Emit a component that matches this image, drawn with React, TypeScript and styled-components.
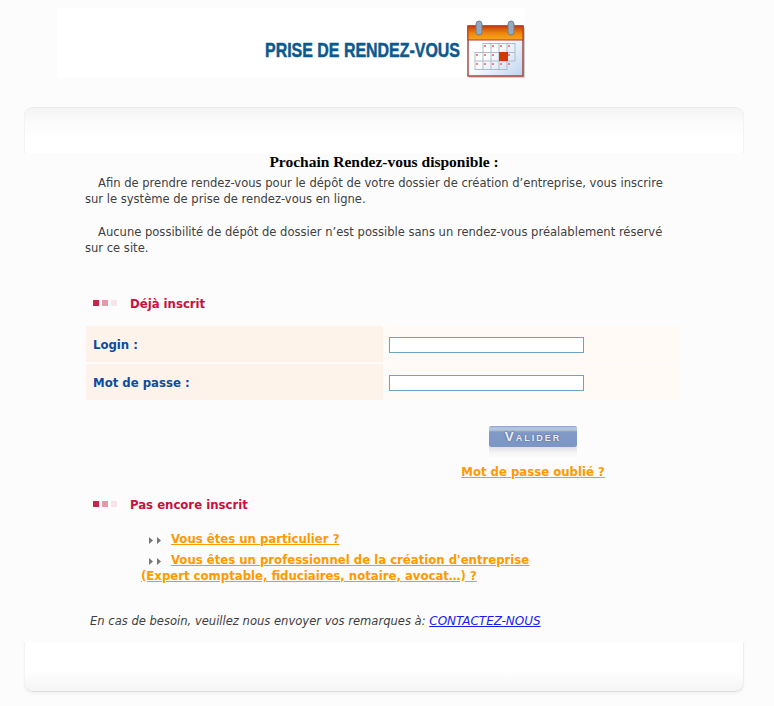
import React from "react";
import styled, { createGlobalStyle } from "styled-components";

const GlobalStyle = createGlobalStyle`
    html, body {
        margin: 0;
        padding: 0;
        background: #fcfcfc;
        font-family: "DejaVu Sans", Verdana, sans-serif;
    }
`;

const Page = styled.div`
    width: 774px;
    height: 706px;
    overflow: hidden;
    padding-top: 8px;
    box-sizing: border-box;
`;

const Banner = styled.div`
    width: 468px;
    height: 70px;
    margin-left: 57px;
    background: #ffffff;
    display: flex;
    align-items: flex-start;
    padding-left: 208px;
    box-sizing: border-box;
`;

const BannerTitle = styled.svg`
    width: 197px;
    height: 24px;
    margin-top: 29px;
    flex: none;
    overflow: visible;
`;

const BannerIcon = styled.svg`
    width: 60px;
    height: 60px;
    margin-top: 12px;
    margin-left: 5px;
    flex: none;
`;

const Frame = styled.div`
    width: 720px;
    margin: 29px 0 0 24px;
`;

const PanelTop = styled.div`
    height: 46px;
    box-sizing: border-box;
    border-radius: 9px 9px 0 0;
    border-top: 1px solid #eaeaea;
    background: linear-gradient(#f4f4f4 0, #fafafa 12px, #ffffff 30px);
    box-shadow: inset 1px 0 0 #f3f3f3, inset -1px 0 0 #f3f3f3;
`;

const PanelBottom = styled.div`
    height: 50px;
    margin-top: 13px;
    box-sizing: border-box;
    border-radius: 0 0 9px 9px;
    border-bottom: 1px solid #dedede;
    background: linear-gradient(#ffffff 0, #ffffff 28px, #f5f5f5 100%);
    box-shadow: inset 1px 0 0 #f3f3f3, inset -1px 0 0 #eeeeee, 0 2px 3px #f3f3f3;
`;

const Title = styled.h1`
    margin: 0;
    height: 23px;
    text-align: center;
    font: bold 15.5px/18px "Liberation Serif", "Times New Roman", serif;
    color: #000000;
`;

const Content = styled.div`
    padding-left: 61px;
    width: 596px;
`;

const Paragraph = styled.p`
    max-width: 585px;
    margin: 0 0 18px;
    text-indent: 13px;
    font-size: 11.55px;
    line-height: 15.5px;
    color: #404040;
`;

const SectionHead = styled.div<{ $top: number }>`
    display: flex;
    align-items: center;
    gap: 13px;
    margin-top: ${(p) => p.$top}px;
    padding-left: 8px;
    height: 16px;
    font-family: "DejaVu Sans Condensed", "DejaVu Sans", sans-serif;
    font-size: 13px;
    font-weight: bold;
    color: #c8103c;
`;

const Squares = styled.span`
    display: flex;
    gap: 3px;
`;

const Square = styled.i<{ $color: string }>`
    display: block;
    width: 6px;
    height: 6px;
    background: ${(p) => p.$color};
`;

const FormGrid = styled.div`
    display: grid;
    grid-template-columns: 297px 295px;
    grid-auto-rows: 36px;
    gap: 2px;
    margin: 15px 0 0 1px;
`;

const LabelCell = styled.label`
    display: flex;
    align-items: center;
    padding-left: 7px;
    background: #fef3ea;
    font-family: "DejaVu Sans Condensed", "DejaVu Sans", sans-serif;
    font-size: 13px;
    font-weight: bold;
    color: #0a4da3;
`;

const InputCell = styled.div`
    display: flex;
    align-items: center;
    padding: 2px 0 0 4px;
    background: #fffaf6;
`;

const TextInput = styled.input`
    width: 195px;
    height: 16px;
    box-sizing: border-box;
    border: 1px solid #6ba3c7;
    background: #ffffff;
    padding: 0;
    outline: none;
`;

const ActionColumn = styled.div`
    display: flex;
    flex-direction: column;
    align-items: center;
    width: 144px;
    margin: 26px 0 0 376px;
`;

const ValidateButton = styled.button`
    position: relative;
    display: block;
    width: 88px;
    height: 21px;
    padding: 1px 0 0;
    border: 0;
    border-radius: 2px;
    background: linear-gradient(#8aa1cb 0, #b9c8e3 2px, #b3c3e0 4px, #819ac7 6px, #7c96c5 100%);
    color: #e9eef8;
    font: bold 13.5px/16px "Liberation Sans", Arial, sans-serif;
    letter-spacing: 2px;
    font-variant: small-caps;
    text-shadow: 0 0 2px #40557e;

    &::after {
        content: "";
        position: absolute;
        left: 0;
        right: 0;
        top: 100%;
        height: 13px;
        background: linear-gradient(#dfe0e6, #f6f6f7 6px, #ffffff);
    }
`;

const OrangeLink = styled.a`
    font-family: "DejaVu Sans Condensed", "DejaVu Sans", sans-serif;
    font-size: 13px;
    font-weight: bold;
    line-height: 16px;
    color: #ff9900;
    text-decoration: underline;
`;

const ForgotLink = styled(OrangeLink)`
    margin-top: 17px;
    white-space: nowrap;
`;

const LinkList = styled.div`
    margin: 19px 0 0 56px;
    width: 500px;
`;

const LinkRow = styled.div`
    line-height: 16px;
    font-size: 13px;
    margin-bottom: 5px;
`;

const Arrows = styled.svg`
    display: inline-block;
    width: 13px;
    height: 7px;
    margin: 0 9px 0 8px;
    vertical-align: -1px;
`;

const HelpLine = styled.p`
    margin: 30px 0 0 5px;
    font-size: 11.55px;
    line-height: 15px;
    font-style: italic;
    color: #404040;
    white-space: nowrap;

    a {
        font-size: 12px;
        color: #1a1aee;
        text-decoration: underline;
    }
`;

function CalendarIcon() {
    const cols = [8, 16, 24, 32, 40];
    const rows = [23, 32, 41];
    return (
        <BannerIcon viewBox="0 0 60 60">
            <defs>
                <linearGradient id="sheet" x1="0" y1="0" x2="1" y2="1">
                    <stop offset="0.45" stopColor="#ffffff" />
                    <stop offset="1" stopColor="#bcd2f0" />
                </linearGradient>
                <linearGradient id="band" x1="0" y1="0" x2="0" y2="1">
                    <stop offset="0" stopColor="#c8400c" />
                    <stop offset="0.55" stopColor="#ee8a0c" />
                    <stop offset="1" stopColor="#f6a81a" />
                </linearGradient>
            </defs>
            <rect x="2" y="8" width="56" height="50" fill="#8a8a8a" opacity="0.4" />
            <rect x="1" y="6" width="55" height="50" fill="url(#sheet)" stroke="#a83c34" strokeWidth="1.4" />
            <rect x="1" y="6" width="55" height="14" fill="url(#band)" stroke="#b5361a" strokeWidth="1" />
            <rect x="9" y="1" width="6" height="14" rx="3" fill="#96a8bc" stroke="#6f7f92" />
            <rect x="41" y="1" width="6" height="14" rx="3" fill="#96a8bc" stroke="#6f7f92" />
            <path
                d="M16 23.5H48M8 32.5H48M8 41H48M8 49.5H40M8 32V50M16 23V50M24 23V50M32 23V50M40 23V50M48 23V41"
                fill="none"
                stroke="#a8b4c4"
                strokeWidth="0.9"
            />
            <rect x="32" y="32" width="9" height="9" fill="#cc3a06" />
            {rows.map((y) =>
                cols.map((x) =>
                    (y === 23 && x === 8) || (y === 32 && x === 32) ? null : (
                        <rect key={`${x}-${y}`} x={x + 1} y={y + 2} width="2" height="2" fill="#f4827a" />
                    ),
                ),
            )}
        </BannerIcon>
    );
}

function ArrowPair() {
    return (
        <Arrows viewBox="0 0 13 7">
            <path d="M0 0L4 3.5L0 7Z" fill="#777777" />
            <path d="M8 0L12 3.5L8 7Z" fill="#777777" />
        </Arrows>
    );
}

function Marker() {
    return (
        <Squares>
            <Square $color="#c9254a" />
            <Square $color="#e598a8" />
            <Square $color="#f7e3e8" />
        </Squares>
    );
}

export default function App() {
    return (
        <Page>
            <GlobalStyle />
            <Banner>
                <BannerTitle viewBox="0 0 197 24">
                    <text
                        x="0"
                        y="20"
                        textLength="195"
                        lengthAdjust="spacingAndGlyphs"
                        fontFamily="Liberation Sans, Arial, sans-serif"
                        fontWeight="bold"
                        fontSize="21"
                        fill="#0b5a8e"
                        stroke="#0b5a8e"
                        strokeWidth="0.5"
                    >
                        PRISE DE RENDEZ-VOUS
                    </text>
                </BannerTitle>
                <CalendarIcon />
            </Banner>
            <Frame>
                <PanelTop />
                <Title>Prochain Rendez-vous disponible :</Title>
                <Content>
                    <Paragraph>
                        Afin de prendre rendez-vous pour le dépôt de votre dossier de création d’entreprise, vous
                        inscrire sur le système de prise de rendez-vous en ligne.
                    </Paragraph>
                    <Paragraph>
                        Aucune possibilité de dépôt de dossier n’est possible sans un rendez-vous préalablement
                        réservé sur ce site.
                    </Paragraph>
                    <SectionHead $top={39}>
                        <Marker />
                        Déjà inscrit
                    </SectionHead>
                    <FormGrid>
                        <LabelCell htmlFor="login">Login :</LabelCell>
                        <InputCell>
                            <TextInput id="login" type="text" />
                        </InputCell>
                        <LabelCell htmlFor="password">Mot de passe :</LabelCell>
                        <InputCell>
                            <TextInput id="password" type="password" />
                        </InputCell>
                    </FormGrid>
                    <ActionColumn>
                        <ValidateButton>Valider</ValidateButton>
                        <ForgotLink href="#">Mot de passe oublié ?</ForgotLink>
                    </ActionColumn>
                    <SectionHead $top={16}>
                        <Marker />
                        Pas encore inscrit
                    </SectionHead>
                    <LinkList>
                        <LinkRow>
                            <ArrowPair />
                            <OrangeLink href="#">Vous êtes un particulier ?</OrangeLink>
                        </LinkRow>
                        <LinkRow>
                            <ArrowPair />
                            <OrangeLink href="#">
                                Vous êtes un professionnel de la création d'entreprise
                                <br />
                                (Expert comptable, fiduciaires, notaire, avocat…) ?
                            </OrangeLink>
                        </LinkRow>
                    </LinkList>
                    <HelpLine>
                        En cas de besoin, veuillez nous envoyer vos remarques à: <a href="#">CONTACTEZ-NOUS</a>
                    </HelpLine>
                </Content>
                <PanelBottom />
            </Frame>
        </Page>
    );
}
